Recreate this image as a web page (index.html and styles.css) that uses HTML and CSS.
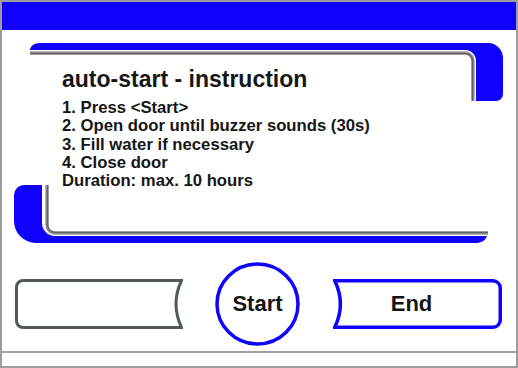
FILE: index.html
```html
<!DOCTYPE html>
<html>
<head>
<meta charset="utf-8">
<link rel="stylesheet" href="styles.css">
</head>
<body>
<div class="screen">
  <div class="topbar"></div>
  <div class="panel">
    <svg class="panel-deco" width="490" height="200" viewBox="0 0 490 200">
      <path class="blue" d="M16,7 C16.5,3 20,0 26,0 H474 A15,15 0 0 1 489,15 V51 A7,7 0 0 1 482,58 H462 V18 A11,11 0 0 0 451,7 Z"/>
      <path class="gray" d="M16,10 H451 A8,8 0 0 1 459,18 V58"/>
      <path class="gray-core" d="M16,10.5 H451 A7.5,7.5 0 0 1 458.5,18 V58"/>
      <path class="blue" d="M10,142 H28 V180 A13,13 0 0 0 41,193 H473 C471,198 467,200 461,200 H22 A22,22 0 0 1 0,178 V152 A10,10 0 0 1 10,142 Z"/>
      <path class="gray" d="M33,142 V182 A8,8 0 0 0 41,190 H474"/>
      <path class="gray-core" d="M33.5,142 V182 A7.5,7.5 0 0 0 41,189.5 H474"/>
    </svg>
    <div class="panel-text">
      <h1 class="title">auto-start - instruction</h1>
      <div class="steps">
        <div>1. Press &lt;Start&gt;</div>
        <div>2. Open door until buzzer sounds (30s)</div>
        <div>3. Fill water if necessary</div>
        <div>4. Close door</div>
        <div>Duration: max. 10 hours</div>
      </div>
    </div>
  </div>
  <div class="buttons">
    <div class="btn btn-left">
      <svg class="btn-shape" width="168" height="50" viewBox="0 0 168 50">
        <path class="stroke-gray" d="M8,1.5 H166.5 Q155.5,25 166.5,48.5 H8 A6.5,6.5 0 0 1 1.5,42 V8 A6.5,6.5 0 0 1 8,1.5 Z"/>
      </svg>
    </div>
    <div class="btn btn-start">
      <svg class="btn-shape" width="85" height="84" viewBox="0 0 85 84">
        <ellipse class="stroke-blue" cx="42.5" cy="42" rx="40.5" ry="40"/>
      </svg>
      <span class="label">Start</span>
    </div>
    <div class="btn btn-end">
      <svg class="btn-shape" width="169" height="50" viewBox="0 0 169 50">
        <path class="stroke-blue" d="M1.75,1.75 H160 A7.25,7.25 0 0 1 167.25,9 V41 A7.25,7.25 0 0 1 160,48.25 H1.75 Q13,25 1.75,1.75 Z"/>
      </svg>
      <span class="label">End</span>
    </div>
  </div>
  <div class="divider"></div>
</div>
</body>
</html>
```
FILE: styles.css
```css
html, body {
  margin: 0;
  padding: 0;
  background: #ffffff;
}

.screen {
  width: 518px;
  height: 368px;
  box-sizing: border-box;
  border: 2px solid #9d9d9d;
  background: #ffffff;
  display: flex;
  flex-direction: column;
  font-family: "Liberation Sans", Arial, sans-serif;
  color: #161616;
}

.topbar {
  height: 28px;
  background: #1000ff;
  flex: none;
}

.panel {
  position: relative;
  width: 490px;
  height: 200px;
  margin: 13px 0 0 12px;
  flex: none;
}

.panel-deco {
  position: absolute;
  left: 0;
  top: 0;
}

.blue {
  fill: #1000ff;
}

.gray {
  fill: none;
  stroke: #9a9a9a;
  stroke-width: 3.5;
}

.gray-core {
  fill: none;
  stroke: #626262;
  stroke-width: 1.5;
}

.panel-text {
  position: relative;
  padding: 23px 0 0 48px;
}

.title {
  margin: 0 0 6px 0;
  font-size: 23px;
  line-height: 27px;
  font-weight: bold;
}

.steps {
  font-size: 16.7px;
  line-height: 18.3px;
  font-weight: bold;
}

.buttons {
  display: flex;
  align-items: center;
  height: 84px;
  margin-top: 19px;
  padding-left: 13px;
  flex: none;
}

.btn {
  position: relative;
  display: flex;
  align-items: center;
  justify-content: center;
  flex: none;
}

.btn-shape {
  position: absolute;
  left: 0;
  top: 0;
}

.btn-left {
  width: 168px;
  height: 50px;
}

.btn-start {
  width: 85px;
  height: 84px;
  margin-left: 32px;
}

.btn-end {
  width: 169px;
  height: 50px;
  margin-left: 33px;
  box-sizing: border-box;
  padding-right: 12px;
}

.stroke-gray {
  fill: #ffffff;
  stroke: #515959;
  stroke-width: 3;
}

.stroke-blue {
  fill: #ffffff;
  stroke: #1000ff;
  stroke-width: 3.5;
}

.label {
  position: relative;
  font-size: 22px;
  font-weight: bold;
  color: #141414;
}

.divider {
  height: 2px;
  margin-top: 5px;
  background: #a0a0a0;
  flex: none;
}
```
